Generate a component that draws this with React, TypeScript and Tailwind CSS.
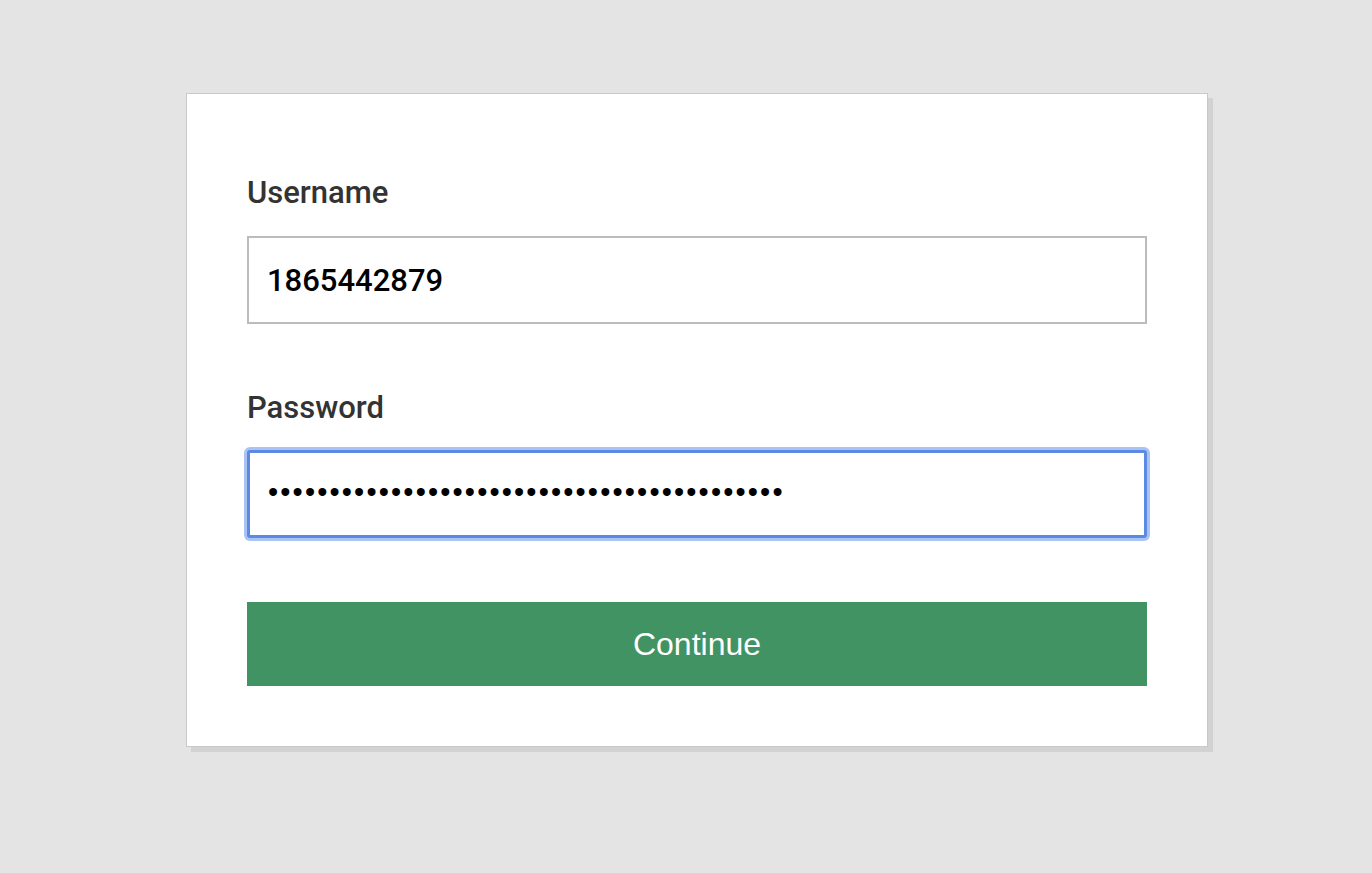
import { useState } from 'react'

export default function App() {
  const [username, setUsername] = useState('1865442879')
  const [password, setPassword] = useState('a'.repeat(42))

  return (
    <div className="h-[873px] w-full overflow-hidden bg-[#e4e4e4] pt-[93px]">
      <form
        onSubmit={(ev) => ev.preventDefault()}
        className="ml-[186px] flex w-[1022px] flex-col border border-[#c9c9c9] bg-white px-[60px] pb-[60px] pt-[81px] shadow-[5px_5px_0_#d2d2d2]"
      >
        <label
          htmlFor="username"
          className="block font-['Roboto',sans-serif] text-[31px] font-medium leading-[36px] text-[#333333]"
        >
          Username
        </label>
        <input
          id="username"
          type="text"
          value={username}
          onChange={(ev) => setUsername(ev.target.value)}
          className="mt-[25px] h-[88px] w-full border-2 border-[#bcbcbc] bg-white px-[18px] font-['Roboto',sans-serif] text-[31px] font-medium text-black outline-none"
        />

        <label
          htmlFor="password"
          className="mt-[66px] block font-['Roboto',sans-serif] text-[31px] font-medium leading-[36px] text-[#333333]"
        >
          Password
        </label>
        <input
          id="password"
          type="password"
          value={password}
          onChange={(ev) => setPassword(ev.target.value)}
          className="mt-[24px] h-[88px] w-full rounded-[3px] border-[3px] border-[#5b89e3] bg-white px-[18px] pb-[4px] font-['Liberation_Sans',Arial,sans-serif] text-[29px] tracking-[2.15px] text-black shadow-[0_0_0_3px_#a9c3f3] outline-none"
        />

        <button
          type="submit"
          className="mt-[64px] h-[84px] w-full bg-[#429364] font-['Liberation_Sans',Arial,sans-serif] text-[32px] text-white"
        >
          Continue
        </button>
      </form>
    </div>
  )
}
